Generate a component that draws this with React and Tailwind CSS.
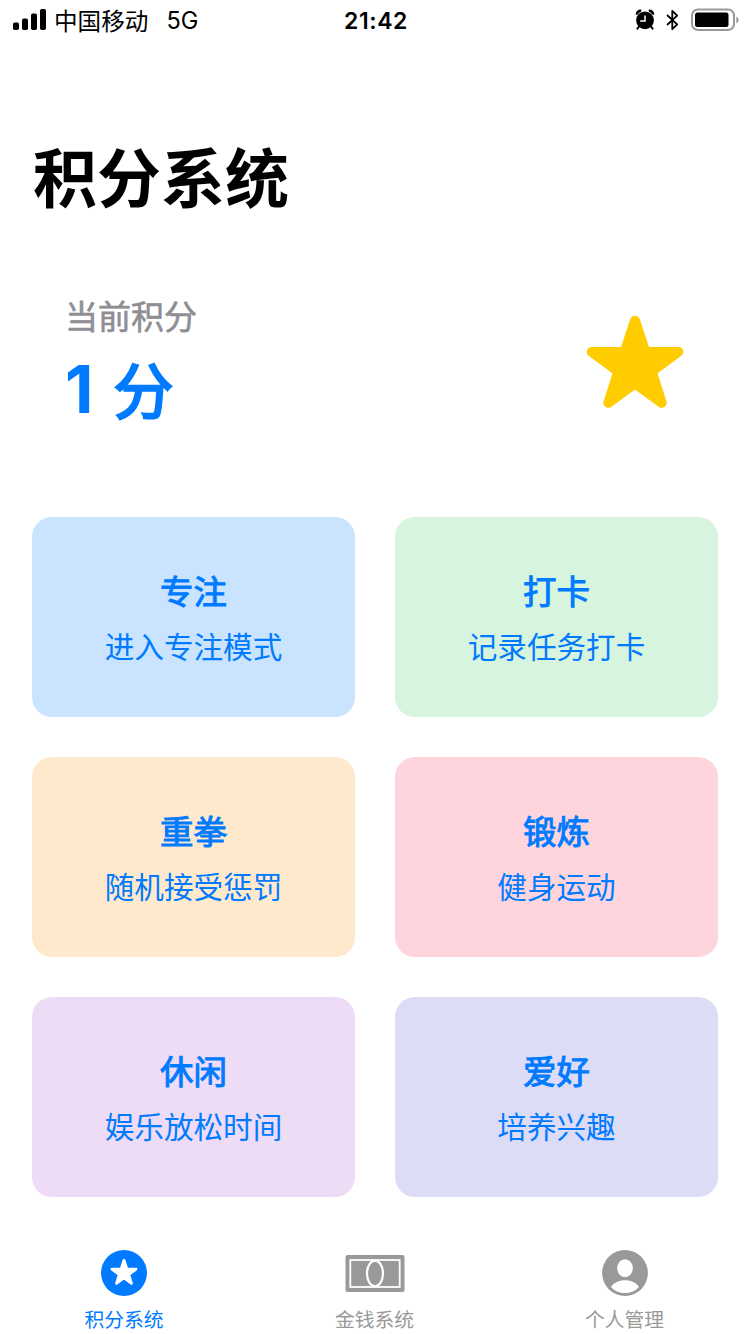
const cards = [
    { title: "专注", desc: "进入专注模式", bg: "bg-[#cae4ff]" },
    { title: "打卡", desc: "记录任务打卡", bg: "bg-[#d6f4de]" },
    { title: "重拳", desc: "随机接受惩罚", bg: "bg-[#ffe9cd]" },
    { title: "锻炼", desc: "健身运动", bg: "bg-[#ffd5dd]" },
    { title: "休闲", desc: "娱乐放松时间", bg: "bg-[#eedcf6]" },
    { title: "爱好", desc: "培养兴趣", bg: "bg-[#dcdcf7]" },
];

function Star({ className }) {
    return (
        <svg viewBox="-50 -50 100 100" className={className}>
            <path
                d="M0-45.6 10.4-14.3 43.4-14.1 16.8 5.5 26.8 36.9 0 17.6-26.8 36.9-16.8 5.5-43.4-14.1-10.4-14.3Z"
                fill="currentColor"
                stroke="currentColor"
                strokeWidth="9.8"
                strokeLinejoin="round"
            />
        </svg>
    );
}

/* ---------------- STATUS BAR ---------------- */
function StatusBar() {
    return (
        <div className="grid grid-cols-3 items-center h-10 pl-[13px] pr-[11px] text-black">
            <div className="flex items-center">
                <svg width="34" height="22" viewBox="0 0 34 22" className="shrink-0">
                    <rect x="0" y="13.5" width="6" height="7.5" rx="1.8" />
                    <rect x="9" y="9.5" width="6" height="11.5" rx="1.8" />
                    <rect x="18" y="4.5" width="6" height="16.5" rx="1.8" />
                    <rect x="27" y="0" width="6" height="21" rx="1.8" />
                </svg>
                <span className="ml-[7px] pt-[3px] text-[23.6px] leading-9 whitespace-nowrap">中国移动</span>
                <span className="ml-[18px] pt-[2px] text-[23.6px] leading-9">5G</span>
            </div>
            <div className="pt-[2px] text-center text-[23px] font-semibold leading-9 tracking-[0.6px]">21:42</div>
            <div className="flex items-center justify-end">
                <svg width="20" height="22" viewBox="0 0 20 22">
                    <path d="M2 5.6A3.4 3.4 0 0 1 6.2 2M18 5.6A3.4 3.4 0 0 0 13.8 2" fill="none" stroke="black" strokeWidth="2.6" />
                    <path d="m4 17.5-1.6 2.2M16 17.5l1.6 2.2" stroke="black" strokeWidth="2" strokeLinecap="round" />
                    <circle cx="10" cy="11.3" r="8.9" />
                    <path d="M10 6.5v5.5H5.2" fill="none" stroke="white" strokeWidth="1.5" />
                </svg>
                <svg width="13" height="22" viewBox="0 0 13 22" className="ml-[11px]">
                    <path d="m1 6 10.2 9.4-4.9 4.8V1.8l4.9 4.8L1 16" fill="none" stroke="black" strokeWidth="1.8" strokeLinejoin="round" />
                </svg>
                <svg width="48" height="24" viewBox="0 0 48 24" className="ml-[12px] shrink-0">
                    <rect x="1" y="1.5" width="42" height="20.5" rx="6" fill="none" stroke="#999" strokeWidth="2" />
                    <rect x="4" y="4.5" width="33.5" height="14.5" rx="2.5" />
                    <path d="M45.3 8.5c3 1.5 3 5.5 0 7Z" fill="#999" />
                </svg>
            </div>
        </div>
    );
}

/* ---------------- TAB BAR ---------------- */
function TabBar() {
    return (
        <div className="grid grid-cols-3 pt-[53px] text-[19.8px] text-[#999999]">
            <div className="flex flex-col items-center pr-[2px] text-[#007aff]">
                <div className="flex items-center justify-center size-[46px] rounded-full bg-[#007aff]">
                    <Star className="size-[28px] text-white" />
                </div>
                <span className="mt-[8px] leading-8">积分系统</span>
            </div>
            <div className="flex flex-col items-center pr-[1px]">
                <svg width="60" height="46" viewBox="0 0 60 46">
                    <rect x="0.5" y="5" width="59" height="37" rx="2" fill="currentColor" />
                    <rect x="5.3" y="10" width="49.4" height="27" fill="none" stroke="white" strokeWidth="1.8" />
                    <ellipse cx="30" cy="23.5" rx="8" ry="12.8" fill="currentColor" stroke="white" strokeWidth="2.2" />
                </svg>
                <span className="mt-[8px] leading-8">金钱系统</span>
            </div>
            <div className="flex flex-col items-center pr-[1px]">
                <svg width="46" height="46" viewBox="0 0 47 47">
                    <circle cx="23.5" cy="23.5" r="23.4" fill="currentColor" />
                    <ellipse cx="23.5" cy="18.6" rx="8" ry="9.2" fill="white" />
                    <path d="M9.2 37.8C12 33.5 17.2 31 23.5 31s11.5 2.5 14.3 6.8C34.5 41.5 29.5 44 23.5 44S12.5 41.5 9.2 37.8Z" fill="white" />
                </svg>
                <span className="mt-[8px] leading-8">个人管理</span>
            </div>
        </div>
    );
}

export default function App() {
    return (
        <div className="w-[750px] h-[1334px] overflow-hidden bg-white font-[Inter,'Noto_Sans_CJK_SC',sans-serif]">
            <StatusBar />

            <h1 className="h-[177px] pt-[99px] pl-[33px] text-[64px] leading-[80px] font-bold text-black">积分系统</h1>

            {/* Current points */}
            <div className="flex justify-between h-[300px] pt-[78px] pl-[65px] pr-[65px]">
                <div>
                    <p className="text-[33px] leading-[44px] text-[#8e8e93] [-webkit-text-stroke:0.6px_#8e8e93]">当前积分</p>
                    <p className="flex gap-[20px] mt-[10px] text-[60px] leading-[80px] text-[#007aff]">
                        <span className="text-[66px] font-bold">1</span>
                        <span className="pt-[3px] [-webkit-text-stroke:2.4px_#007aff]">分</span>
                    </p>
                </div>
                <Star className="mt-[21px] size-[100px] text-[#ffcc00]" />
            </div>

            {/* Cards */}
            <div className="grid grid-cols-2 gap-10 px-8">
                {cards.map((card) => (
                    <div
                        key={card.title}
                        className={`flex flex-col items-center h-[200px] pt-[50px] rounded-[20px] text-[#007aff] ${card.bg}`}
                    >
                        <p className="text-[33.4px] leading-[50px] [-webkit-text-stroke:1px_#007aff]">{card.title}</p>
                        <p className="mt-[8px] text-[29.6px] leading-[44px]">{card.desc}</p>
                    </div>
                ))}
            </div>

            <TabBar />
        </div>
    );
}
